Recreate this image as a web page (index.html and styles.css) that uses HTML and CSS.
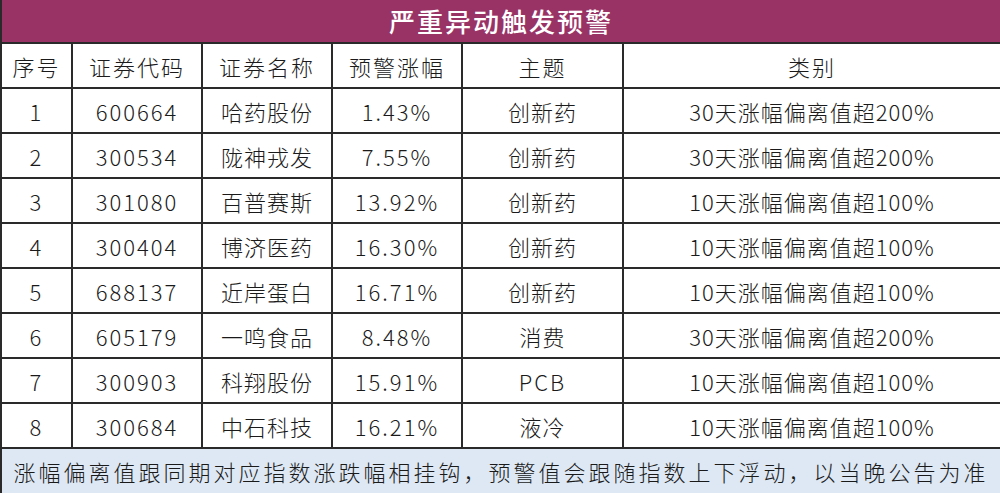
FILE: index.html
```html
<!DOCTYPE html>
<html lang="zh">
<head>
<meta charset="utf-8">
<link rel="stylesheet" href="styles.css">
</head>
<body>
<table class="sheet">
  <colgroup>
    <col class="c-no">
    <col class="c-code">
    <col class="c-name">
    <col class="c-pct">
    <col class="c-theme">
    <col class="c-type">
  </colgroup>
  <tr class="title-row"><td colspan="6" class="title">严重异动触发预警</td></tr>
  <tr class="head-row">
    <td>序号</td><td>证券代码</td><td>证券名称</td><td>预警涨幅</td><td>主题</td><td>类别</td>
  </tr>
  <tr><td class="num">1</td><td class="num">600664</td><td>哈药股份</td><td class="num">1.43%</td><td>创新药</td><td class="mix">30天涨幅偏离值超200%</td></tr>
  <tr><td class="num">2</td><td class="num">300534</td><td>陇神戎发</td><td class="num">7.55%</td><td>创新药</td><td class="mix">30天涨幅偏离值超200%</td></tr>
  <tr><td class="num">3</td><td class="num">301080</td><td>百普赛斯</td><td class="num">13.92%</td><td>创新药</td><td class="mix">10天涨幅偏离值超100%</td></tr>
  <tr><td class="num">4</td><td class="num">300404</td><td>博济医药</td><td class="num">16.30%</td><td>创新药</td><td class="mix">10天涨幅偏离值超100%</td></tr>
  <tr><td class="num">5</td><td class="num">688137</td><td>近岸蛋白</td><td class="num">16.71%</td><td>创新药</td><td class="mix">10天涨幅偏离值超100%</td></tr>
  <tr><td class="num">6</td><td class="num">605179</td><td>一鸣食品</td><td class="num">8.48%</td><td>消费</td><td class="mix">30天涨幅偏离值超200%</td></tr>
  <tr><td class="num">7</td><td class="num">300903</td><td>科翔股份</td><td class="num">15.91%</td><td class="num">PCB</td><td class="mix">10天涨幅偏离值超100%</td></tr>
  <tr><td class="num">8</td><td class="num">300684</td><td>中石科技</td><td class="num">16.21%</td><td>液冷</td><td class="mix">10天涨幅偏离值超100%</td></tr>
  <tr class="foot-row"><td colspan="6" class="foot">涨幅偏离值跟同期对应指数涨跌幅相挂钩，预警值会跟随指数上下浮动，以当晚公告为准</td></tr>
</table>
</body>
</html>
```

FILE: styles.css
```css
html, body {
  margin: 0;
  padding: 0;
  background: #ffffff;
}

.sheet {
  width: 1000px;
  border-collapse: collapse;
  table-layout: fixed;
  font-family: "Noto Sans CJK SC", "Noto Sans", sans-serif;
  font-weight: 300;
  color: #1a1a1a;
  font-size: 22px;
}

.c-no { width: 71px; }
.c-code { width: 130px; }
.c-name { width: 130px; }
.c-pct { width: 130px; }
.c-theme { width: 161px; }
.c-type { width: 378px; }

.sheet td {
  border: 2px solid #2a2a2a;
  text-align: center;
  vertical-align: middle;
  padding: 0;
  height: 43px;
  letter-spacing: 1px;
  line-height: 1;
  white-space: nowrap;
}

.sheet td.title {
  background: #993366;
  color: #ffffff;
  font-size: 26px;
  font-weight: 500;
  letter-spacing: 2px;
  height: 42px;
  border-top: 0;
}

.head-row td {
  font-size: 22px;
  letter-spacing: 2px;
}

.sheet td.num {
  letter-spacing: 2px;
}

.sheet td.mix {
  letter-spacing: 1px;
}

.sheet td.foot {
  background: #dde8f4;
  text-align: center;
  letter-spacing: 3px;
  height: 44px;
  border-bottom: 0;
}
```
